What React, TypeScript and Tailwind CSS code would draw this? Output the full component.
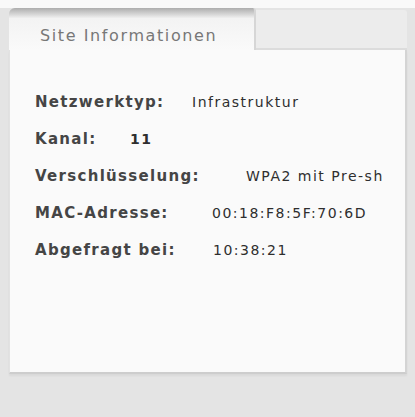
import React from "react";

const rows: { label: string; value: string; w: string; bold?: boolean }[] = [
  { label: "Netzwerktyp:", value: "Infrastruktur", w: "w-[157px]" },
  { label: "Kanal:", value: "11", w: "w-[95px]", bold: true },
  { label: "Verschlüsselung:", value: "WPA2 mit Pre-sh", w: "w-[211px]" },
  { label: "MAC-Adresse:", value: "00:18:F8:5F:70:6D", w: "w-[177px]" },
  { label: "Abgefragt bei:", value: "10:38:21", w: "w-[178px]" },
];

export default function App() {
  return (
    <div
      className="w-[415px] h-[417px] bg-[#e4e4e4] flex flex-col overflow-hidden"
      style={{ fontFamily: '"DejaVu Sans", Verdana, sans-serif' }}
    >
      <div className="h-[8px] bg-[#f9f9f9] shrink-0" />
      <div className="flex flex-col pl-[9px] pr-[8px]">
        {/* tab row */}
        <div className="flex h-[42px]">
          <div className="w-[247px] rounded-tl-[6px] rounded-tr-[3px] bg-gradient-to-b from-[#adadad] via-[#f3f3f3] via-[25%] to-[#fafafa] border-r-2 border-[#d6d6d6] pl-[31px] pt-[16px]">
            <span className="text-[16px] leading-[18px] text-[#777] tracking-[1.6px] whitespace-nowrap">
              Site Informationen
            </span>
          </div>
          <div className="flex-1 bg-[#ececec] border-b-2 border-[#dcdcdc] mt-[2px] rounded-tr-[3px]" />
        </div>
        {/* panel body */}
        <div className="h-[324px] bg-[#fafafa] border-l border-[#e2e2e2] border-r-2 border-r-[#d4d4d4] border-b-2 border-b-[#cdcdcd] pl-[25px] pt-[44px] flex flex-col gap-[21px] shadow-[0_2px_2px_rgba(0,0,0,0.05)]">
          {rows.map((r) => (
            <div key={r.label} className="flex items-baseline h-[16px] leading-[16px] whitespace-nowrap">
              <span className={`${r.w} shrink-0 font-bold text-[15px] text-[#454545] tracking-[1.3px]`}>
                {r.label}
              </span>
              <span
                className={`${r.bold ? "font-bold" : ""} text-[14px] text-[#2e2e2e] tracking-[1.5px]`}
              >
                {r.value}
              </span>
            </div>
          ))}
        </div>
      </div>
    </div>
  );
}
